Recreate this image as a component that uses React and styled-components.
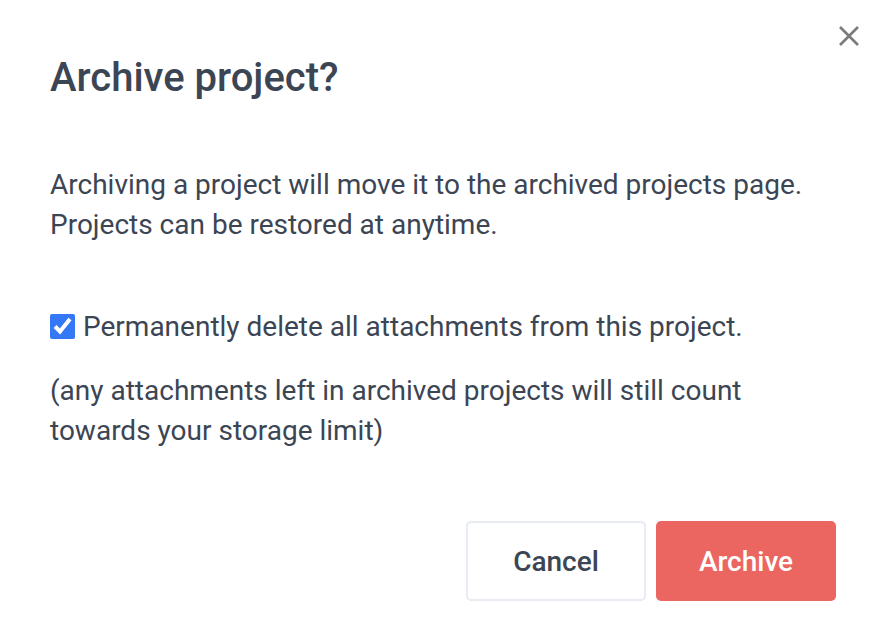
import React, { useState } from 'react';
import styled, { createGlobalStyle } from 'styled-components';

const GlobalStyle = createGlobalStyle`
    html, body {
        margin: 0;
        padding: 0;
        background: #ffffff;
    }
    body {
        font-family: Roboto, 'Liberation Sans', sans-serif;
        color: #3c4553;
    }
`

const App = () => {
    const [checked, setChecked] = useState(true);

    return (
        <>
            <GlobalStyle />
            <Dialog>
                <CloseButton aria-label="Close">
                    <svg width="22" height="22" viewBox="0 0 22 22">
                        <path d="M2 2 L20 20 M20 2 L2 20" stroke="#7b7b7b" strokeWidth="2.6" strokeLinecap="butt" />
                    </svg>
                </CloseButton>

                <Title>Archive project?</Title>

                <Text>
                    Archiving a project will move it to the archived projects page.
                    <br />
                    Projects can be restored at anytime.
                </Text>

                <CheckRow>
                    <Check type="checkbox" checked={checked} onChange={() => setChecked(!checked)} />
                    Permanently delete all attachments from this project.
                </CheckRow>

                <Note>
                    (any attachments left in archived projects will still count
                    <br />
                    towards your storage limit)
                </Note>

                <Actions>
                    <Button>Cancel</Button>
                    <Button primary>Archive</Button>
                </Actions>
            </Dialog>
        </>
    )
}

const Dialog = styled.div`
    position: relative;
    width: 886px;
    height: 640px;
    box-sizing: border-box;
    padding: 56px 50px 0 50px;
    display: flex;
    flex-direction: column;
`

const CloseButton = styled.button`
    position: absolute;
    top: 23px;
    right: 24px;
    width: 26px;
    height: 26px;
    padding: 0;
    border: none;
    background: none;
    display: flex;
    align-items: center;
    justify-content: center;
    cursor: pointer;
`

const Title = styled.h1`
    margin: 0 0 65px 0;
    font-size: 40px;
    line-height: 44px;
    font-weight: 500;
    color: #3c4553;
`

const Text = styled.p`
    margin: 0 0 61px 0;
    font-size: 28px;
    line-height: 40px;
    color: #3c4553;
`

const CheckRow = styled.label`
    display: flex;
    align-items: center;
    gap: 8px;
    height: 40px;
    font-size: 28px;
    color: #3c4553;
    cursor: pointer;
`

const Check = styled.input`
    width: 25px;
    height: 25px;
    margin: 0;
    accent-color: #3478f6;
`

const Note = styled.p`
    margin: 25px 0 70px 0;
    font-size: 28px;
    line-height: 40px;
    color: #3c4553;
`

const Actions = styled.div`
    display: flex;
    justify-content: flex-end;
    gap: 10px;
`

const Button = styled.button`
    width: 180px;
    height: 80px;
    box-sizing: border-box;
    border-radius: 5px;
    border: 2px solid ${props => props.primary ? '#ec6661' : '#e8ebf1'};
    background: ${props => props.primary ? '#ec6661' : '#ffffff'};
    color: ${props => props.primary ? '#ffffff' : '#3c4553'};
    font-family: Roboto, 'Liberation Sans', sans-serif;
    font-size: 28px;
    font-weight: 500;
    cursor: pointer;
`

export default App;
